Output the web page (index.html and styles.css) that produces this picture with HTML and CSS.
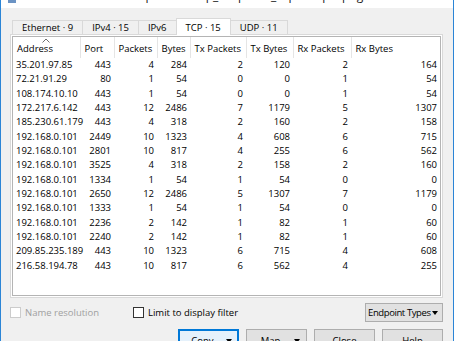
FILE: index.html
```html
<!DOCTYPE html>
<html lang="en">
<head>
    <meta charset="UTF-8">
    <title>Wireshark · Endpoints</title>
    <link rel="stylesheet" href="styles.css">
</head>
<body>
    <div class="window">
        <div class="titlebar">
            <span class="app-icon"></span>
            <span class="title">Wireshark · Endpoints · http_keepalive_capture.pcapng</span>
        </div>

        <div class="dialog">
            <div class="tabs">
                <div class="tab">Ethernet · 9</div>
                <div class="tab">IPv4 · 15</div>
                <div class="tab">IPv6</div>
                <div class="tab tab-active">TCP · 15</div>
                <div class="tab">UDP · 11</div>
            </div>

            <div class="pane">
                <div class="tree">
                    <table class="grid">
                        <colgroup>
                            <col class="c-addr">
                            <col class="c-port">
                            <col class="c-packets">
                            <col class="c-bytes">
                            <col class="c-txp">
                            <col class="c-txb">
                            <col class="c-rxp">
                            <col>
                        </colgroup>
                        <thead>
                            <tr>
                                <th>Address
                                    <svg class="sort-arrow" width="8" height="5" viewBox="0 0 8 5"><polyline points="0.5,4.5 4,1 7.5,4.5" fill="none" stroke="#707070" stroke-width="1"/></svg>
                                </th>
                                <th>Port</th>
                                <th>Packets</th>
                                <th>Bytes</th>
                                <th>Tx Packets</th>
                                <th>Tx Bytes</th>
                                <th>Rx Packets</th>
                                <th>Rx Bytes</th>
                            </tr>
                        </thead>
                        <tbody>
                            <tr><td class="addr">35.201.97.85</td><td>443</td><td>4</td><td>284</td><td>2</td><td>120</td><td>2</td><td>164</td></tr>
                            <tr><td class="addr">72.21.91.29</td><td>80</td><td>1</td><td>54</td><td>0</td><td>0</td><td>1</td><td>54</td></tr>
                            <tr><td class="addr">108.174.10.10</td><td>443</td><td>1</td><td>54</td><td>0</td><td>0</td><td>1</td><td>54</td></tr>
                            <tr><td class="addr">172.217.6.142</td><td>443</td><td>12</td><td>2486</td><td>7</td><td>1179</td><td>5</td><td>1307</td></tr>
                            <tr><td class="addr">185.230.61.179</td><td>443</td><td>4</td><td>318</td><td>2</td><td>160</td><td>2</td><td>158</td></tr>
                            <tr><td class="addr">192.168.0.101</td><td>2449</td><td>10</td><td>1323</td><td>4</td><td>608</td><td>6</td><td>715</td></tr>
                            <tr><td class="addr">192.168.0.101</td><td>2801</td><td>10</td><td>817</td><td>4</td><td>255</td><td>6</td><td>562</td></tr>
                            <tr><td class="addr">192.168.0.101</td><td>3525</td><td>4</td><td>318</td><td>2</td><td>158</td><td>2</td><td>160</td></tr>
                            <tr><td class="addr">192.168.0.101</td><td>1334</td><td>1</td><td>54</td><td>1</td><td>54</td><td>0</td><td>0</td></tr>
                            <tr><td class="addr">192.168.0.101</td><td>2650</td><td>12</td><td>2486</td><td>5</td><td>1307</td><td>7</td><td>1179</td></tr>
                            <tr><td class="addr">192.168.0.101</td><td>1333</td><td>1</td><td>54</td><td>1</td><td>54</td><td>0</td><td>0</td></tr>
                            <tr><td class="addr">192.168.0.101</td><td>2236</td><td>2</td><td>142</td><td>1</td><td>82</td><td>1</td><td>60</td></tr>
                            <tr><td class="addr">192.168.0.101</td><td>2240</td><td>2</td><td>142</td><td>1</td><td>82</td><td>1</td><td>60</td></tr>
                            <tr><td class="addr">209.85.235.189</td><td>443</td><td>10</td><td>1323</td><td>6</td><td>715</td><td>4</td><td>608</td></tr>
                            <tr><td class="addr">216.58.194.78</td><td>443</td><td>10</td><td>817</td><td>6</td><td>562</td><td>4</td><td>255</td></tr>
                        </tbody>
                    </table>
                </div>
            </div>

            <div class="options">
                <label class="check check-name disabled"><span class="box"></span>Name resolution</label>
                <label class="check"><span class="box"></span>Limit to display filter</label>
                <button class="btn btn-types"><span class="btn-label">Endpoint Types</span><span class="caret"></span></button>
            </div>

            <div class="buttons">
                <button class="btn btn-default"><span class="btn-label">Copy</span><span class="caret"></span></button>
                <button class="btn"><span class="btn-label">Map</span><span class="caret"></span></button>
                <button class="btn"><span class="btn-label">Close</span></button>
                <button class="btn"><span class="btn-label">Help</span></button>
            </div>
        </div>
    </div>
</body>
</html>
```

FILE: styles.css
```css
* {
    margin: 0;
    padding: 0;
    box-sizing: border-box;
}

body {
    font-family: "Open Sans", "Noto Sans", sans-serif;
    font-size: 9.5px;
    color: #000;
    background: #f0f0f0;
}

.window {
    width: 454px;
    height: 341px;
    border-left: 1px solid #2b85d6;
    border-right: 1px solid #2b85d6;
    background: #f0f0f0;
    overflow: hidden;
}

.titlebar {
    height: 8px;
    background: #fff;
    display: flex;
    overflow: hidden;
}

.app-icon {
    width: 8px;
    height: 3px;
    margin-left: 7px;
    background: #6b93c4;
}

.title {
    font-size: 12px;
    line-height: 12px;
    margin-top: -10px;
    margin-left: 42px;
    color: #1a1a1a;
    white-space: nowrap;
}

.dialog {
    padding: 10px 10px 0 9px;
}

/* tab bar */
.tabs {
    display: flex;
    align-items: flex-end;
    height: 16px;
    padding-left: 2px;
}

.tab {
    height: 14px;
    line-height: 12px;
    padding: 1px 9px 0;
    border: 1px solid #d9d9d9;
    border-bottom: none;
    background: #f0f0f0;
    margin-left: -1px;
    white-space: nowrap;
}

.tab:first-child {
    margin-left: 0;
}

.tab-active {
    height: 17px;
    margin-bottom: -1px;
    padding-top: 3px;
    background: #fff;
    position: relative;
    z-index: 1;
}

.pane {
    height: 264px;
    border: 1px solid #d9d9d9;
    background: #fff;
    padding: 1px;
}

.tree {
    height: 100%;
    border: 1px solid #b4b4b4;
    overflow: hidden;
}

/* endpoint table */
.grid {
    width: 427px;
    table-layout: fixed;
    border-collapse: collapse;
}

.c-addr { width: 67px; }
.c-port { width: 34px; }
.c-packets { width: 43px; }
.c-bytes { width: 33px; }
.c-txp { width: 56px; }
.c-txb { width: 47px; }
.c-rxp { width: 58px; }

.grid th {
    height: 21px;
    padding: 2px 0 0 4px;
    font-weight: normal;
    text-align: left;
    white-space: nowrap;
    overflow: hidden;
    border-right: 1px solid #e5e5e5;
    position: relative;
}

.grid th:last-child {
    border-right: none;
}

.sort-arrow {
    position: absolute;
    top: 1px;
    left: 50%;
    margin-left: -4px;
}

.grid td {
    height: 14.33px;
    line-height: 14.33px;
    padding: 0 3px 0 0;
    text-align: right;
    white-space: nowrap;
}

.grid td.addr {
    text-align: left;
    padding-left: 3px;
}

/* options row */
.options {
    display: flex;
    align-items: center;
    height: 19px;
    margin-top: 5px;
}

.check {
    display: flex;
    align-items: center;
    gap: 4px;
    white-space: nowrap;
}

.check-name {
    width: 123px;
    flex: none;
}

.box {
    width: 11px;
    height: 11px;
    border: 1px solid #333;
    background: #fff;
}

.check.disabled {
    color: #a0a0a0;
}

.check.disabled .box {
    border-color: #cccccc;
}

/* buttons */
.btn {
    font: inherit;
    color: #000;
    height: 23px;
    width: 61px;
    background: #e1e1e1;
    border: 1px solid #adadad;
    display: flex;
    align-items: center;
    white-space: nowrap;
}

.btn-label {
    flex: 1;
    text-align: center;
}

.btn-default {
    background: #e5f1fb;
    border-color: #0078d7;
    box-shadow: inset 0 0 0 1px #0078d7;
}

.btn-types {
    margin-left: auto;
    width: 78px;
    height: 19px;
    padding: 0 4px 0 2px;
}

.btn-types .btn-label {
    text-align: left;
    letter-spacing: -0.4px;
}

.caret {
    flex: none;
    width: 0;
    height: 0;
    border-left: 3.5px solid transparent;
    border-right: 3.5px solid transparent;
    border-top: 4px solid #000;
    margin-right: 6px;
}

.btn-types .caret {
    margin-right: 0;
}

.buttons {
    display: flex;
    justify-content: flex-end;
    gap: 7px;
    margin-top: 7px;
}
```
